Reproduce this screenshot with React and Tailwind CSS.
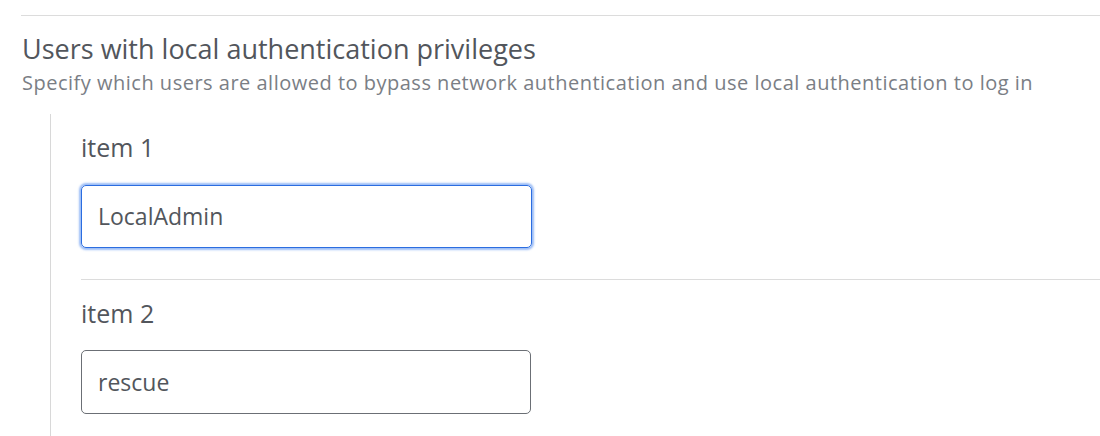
export default function App() {
  return (
    <div className="w-[1100px] h-[436px] bg-white overflow-hidden font-['Open_Sans',sans-serif]">
      <div className="pt-[15px] pl-[21px]">
        <div className="border-t border-[#dcdcdc]" />
        <div className="pt-[17px] pl-[1px]">
          <h2 className="text-[27px] leading-[32px] text-[#52565c]">Users with local authentication privileges</h2>
          <p className="mt-[6px] text-[20px] leading-[24px] tracking-[0.5px] text-[#7a7e85]">
            Specify which users are allowed to bypass network authentication and use local authentication to log in
          </p>
        </div>
        <div className="mt-[19px] ml-[29px] border-l border-[#d8d8d8] pl-[30px] h-[330px]">
          <div className="pt-[18px]">
            <div className="text-[25px] leading-[30px] text-[#52565c]">item 1</div>
            <div className="mt-[23px] w-[451px] h-[63px] rounded-[5px] border border-[#2b6de0] shadow-[0_0_2px_2px_rgba(90,145,240,0.6)] flex items-center pl-[16px] text-[23px] text-[#52565c]">
              LocalAdmin
            </div>
          </div>
          <div className="mt-[31px] border-t border-[#dcdcdc]" />
          <div className="pt-[18px]">
            <div className="text-[25px] leading-[30px] text-[#52565c]">item 2</div>
            <div className="mt-[22px] w-[450px] h-[64px] rounded-[5px] border border-[#6b6f75] flex items-center pl-[16px] text-[23px] text-[#52565c]">
              rescue
            </div>
          </div>
        </div>
      </div>
    </div>
  );
}
